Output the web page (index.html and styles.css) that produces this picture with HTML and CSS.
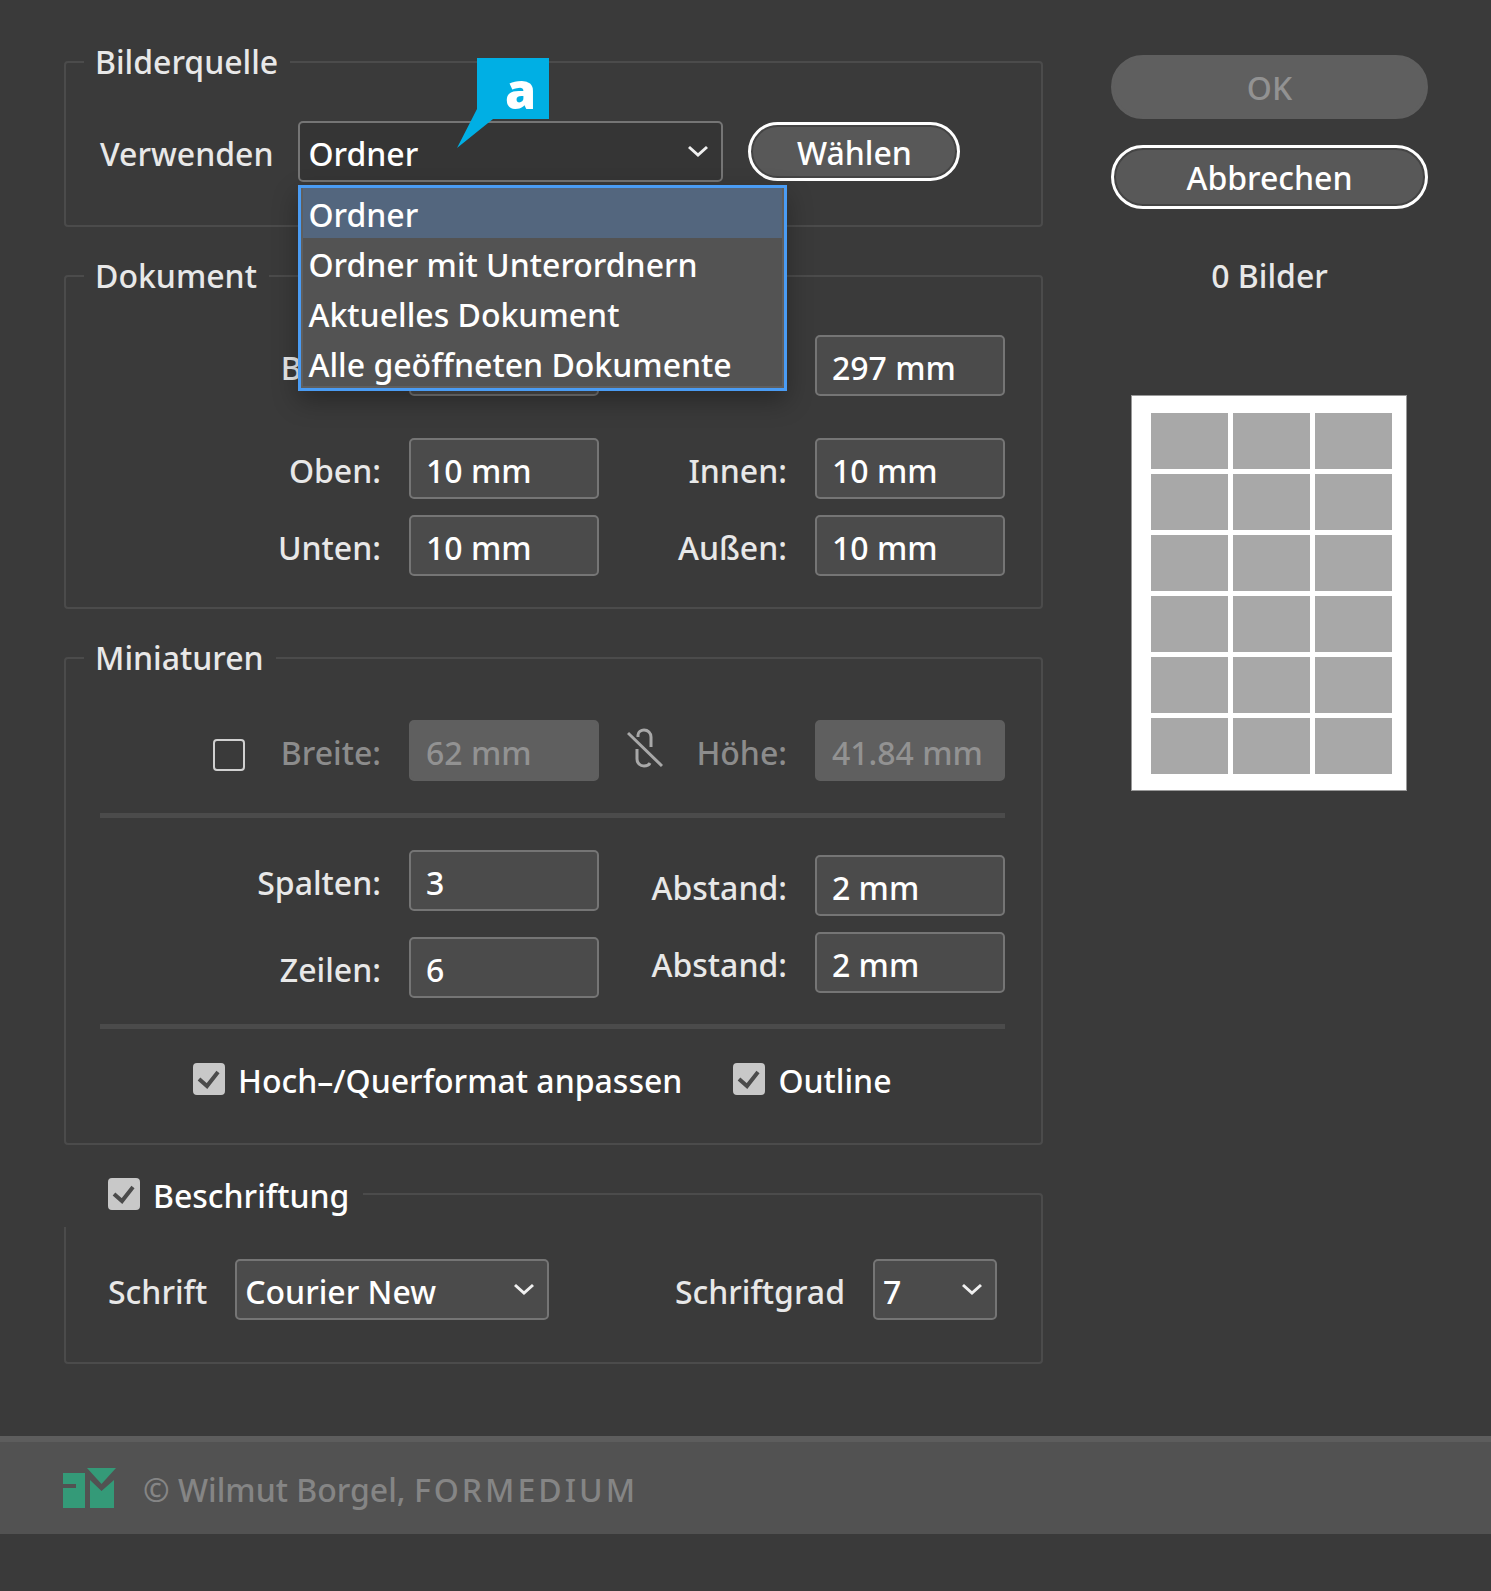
FILE: index.html
```html
<!DOCTYPE html>
<html lang="de">
<head>
<meta charset="utf-8">
<meta name="viewport" content="width=device-width, initial-scale=1">
<title>Kontaktabzug</title>
<link rel="stylesheet" href="styles.css">
</head>
<body>
<form class="dialog">
  <div class="settings">
    <fieldset class="group group-source">
      <legend class="group-title">Bilderquelle</legend>
      <div class="source-row">
        <label class="label" for="source">Verwenden</label>
        <div class="dropdown dropdown-source">
          <select class="select select-open" id="source">
            <option selected>Ordner</option>
            <option>Ordner mit Unterordnern</option>
            <option>Aktuelles Dokument</option>
            <option>Alle geöffneten Dokumente</option>
          </select>
          <svg class="chevron" viewBox="0 0 20 12" aria-hidden="true"><path d="M1 2L10 10L19 2"/></svg>
          <ul class="menu" role="listbox" aria-label="Verwenden">
            <li class="menu-item menu-item-active" role="option" aria-selected="true">Ordner</li>
            <li class="menu-item" role="option">Ordner mit Unterordnern</li>
            <li class="menu-item" role="option">Aktuelles Dokument</li>
            <li class="menu-item" role="option">Alle geöffneten Dokumente</li>
          </ul>
          <div class="callout">
            <svg class="callout-shape" viewBox="0 0 92 90" aria-hidden="true"><path d="M20 0H92V61H36L0 90L20 51Z"/></svg>
            <span class="callout-letter">a</span>
          </div>
        </div>
        <button class="button button-choose" type="button">Wählen</button>
      </div>
    </fieldset>

    <fieldset class="group group-document">
      <legend class="group-title">Dokument</legend>
      <div class="field-grid">
        <label class="label" for="doc-width">Breite:</label>
        <input class="field" id="doc-width" type="text" value="210 mm">
        <label class="label" for="doc-height">Höhe:</label>
        <input class="field" id="doc-height" type="text" value="297 mm">
      </div>
      <div class="field-grid field-grid-margins">
        <label class="label" for="top">Oben:</label>
        <input class="field" id="top" type="text" value="10 mm">
        <label class="label" for="inner">Innen:</label>
        <input class="field" id="inner" type="text" value="10 mm">
        <label class="label" for="bottom">Unten:</label>
        <input class="field" id="bottom" type="text" value="10 mm">
        <label class="label" for="outer">Außen:</label>
        <input class="field" id="outer" type="text" value="10 mm">
      </div>
    </fieldset>

    <fieldset class="group group-thumbs">
      <legend class="group-title">Miniaturen</legend>
      <div class="field-grid">
        <div class="size-toggle">
          <input class="check" type="checkbox" aria-label="Feste Größe">
          <label class="label label-off" for="thumb-width">Breite:</label>
        </div>
        <input class="field" id="thumb-width" type="text" value="62 mm" disabled>
        <div class="size-link">
          <svg class="unlink" viewBox="0 0 36 40" aria-hidden="true"><path d="M11 9V7C11 4 14 2 17 2C21 2 24 5 24 9V19M10 21V31C10 35 13 38 17 38C20 38 22 37 23 35M1 5L35 38"/></svg>
          <label class="label label-off" for="thumb-height">Höhe:</label>
        </div>
        <input class="field" id="thumb-height" type="text" value="41.84 mm" disabled>
      </div>
      <hr class="rule">
      <div class="count-columns">
        <div class="count-column">
          <label class="label" for="columns">Spalten:</label>
          <input class="field" id="columns" type="text" value="3">
          <label class="label" for="rows">Zeilen:</label>
          <input class="field" id="rows" type="text" value="6">
        </div>
        <div class="count-column count-column-gaps">
          <label class="label" for="column-gap">Abstand:</label>
          <input class="field" id="column-gap" type="text" value="2 mm">
          <label class="label" for="row-gap">Abstand:</label>
          <input class="field" id="row-gap" type="text" value="2 mm">
        </div>
      </div>
      <hr class="rule rule-last">
      <div class="options">
        <label class="option"><input class="check" type="checkbox" checked><span class="option-text">Hoch–/Querformat anpassen</span></label>
        <label class="option"><input class="check" type="checkbox" checked><span class="option-text">Outline</span></label>
      </div>
    </fieldset>

    <fieldset class="group group-caption">
      <legend class="group-title caption-title">
        <label class="option"><input class="check" type="checkbox" checked><span class="option-text">Beschriftung</span></label>
      </legend>
      <div class="font-row">
        <div class="font-choice">
          <label class="label" for="font">Schrift</label>
          <div class="dropdown dropdown-font">
            <select class="select" id="font"><option>Courier New</option></select>
            <svg class="chevron" viewBox="0 0 20 12" aria-hidden="true"><path d="M1 2L10 10L19 2"/></svg>
          </div>
        </div>
        <div class="font-choice">
          <label class="label" for="font-size">Schriftgrad</label>
          <div class="dropdown dropdown-size">
            <select class="select" id="font-size"><option>7</option></select>
            <svg class="chevron" viewBox="0 0 20 12" aria-hidden="true"><path d="M1 2L10 10L19 2"/></svg>
          </div>
        </div>
      </div>
    </fieldset>
  </div>

  <aside class="actions">
    <button class="button" type="submit" disabled>OK</button>
    <button class="button" type="button">Abbrechen</button>
    <p class="count">0 Bilder</p>
    <div class="sheet">
      <i class="cell"></i><i class="cell"></i><i class="cell"></i>
      <i class="cell"></i><i class="cell"></i><i class="cell"></i>
      <i class="cell"></i><i class="cell"></i><i class="cell"></i>
      <i class="cell"></i><i class="cell"></i><i class="cell"></i>
      <i class="cell"></i><i class="cell"></i><i class="cell"></i>
      <i class="cell"></i><i class="cell"></i><i class="cell"></i>
    </div>
  </aside>
</form>

<footer class="footer">
  <svg class="logo" viewBox="0 0 54 40" aria-hidden="true"><path d="M0 5H22V40H0V20H13V16H0ZM24 0H53L38.5 16ZM27 12L38.5 23L51 12V40H27Z"/></svg>
  <p class="credit">© Wilmut Borgel, <span class="brand">FORMEDIUM</span></p>
</footer>
</body>
</html>
```
FILE: styles.css
```css
* {
  box-sizing: border-box;
}

body {
  margin: 0;
  background: #3a3a3a;
  color: #fff;
  font: 500 32px/44px "Noto Sans", "Open Sans", sans-serif;
}

input,
select,
button {
  margin: 0;
  color: inherit;
  font: inherit;
}

.dialog {
  display: flex;
  align-items: flex-start;
  gap: 68px;
  padding: 40px 63px 72px 64px;
}

.settings {
  flex: 1;
  min-width: 0;
}

/* Framed groups */

.group {
  min-width: 0;
  margin: 0 0 27px;
  padding: 37px 36px 31px 34px;
  border: 2px solid #4b4b4b;
  border-radius: 4px;
}

.group-source {
  padding-bottom: 43px;
}

.group-thumbs {
  margin-bottom: 16px;
  padding-top: 40px;
  padding-bottom: 42px;
}

.group-caption {
  margin-bottom: 0;
  padding-top: 32px;
  padding-bottom: 42px;
}

.group-title {
  margin-left: -16px;
  padding: 0 12px 0 11px;
  color: #e8e8e8;
}

.caption-title {
  margin-left: -36px;
  padding: 11px 14px 11px 44px;
  background: #3a3a3a;
  color: #fff;
}

/* Labels and fields */

.label {
  padding-top: 4px;
  color: #e8e8e8;
  text-align: right;
  white-space: nowrap;
}

.label-off {
  color: #8c8c8c;
}

.field {
  width: 100%;
  height: 61px;
  padding: 4px 0 0 15px;
  border: 2px solid #757575;
  border-radius: 5px;
  background: #4b4b4b;
}

.field:disabled {
  border-color: #5f5f5f;
  background: #5f5f5f;
  color: #929292;
}

.field-grid {
  display: grid;
  grid-template-columns: minmax(0, 281fr) 190px minmax(0, 160fr) 190px;
  align-items: center;
  gap: 16px 28px;
}

.field-grid-margins {
  margin-top: 42px;
}

.size-toggle,
.size-link {
  display: flex;
  align-items: center;
  justify-content: flex-end;
  gap: 36px;
}

.size-toggle .check {
  margin-top: 8px;
}

.size-link {
  justify-content: space-between;
  gap: 0;
}

.unlink {
  width: 36px;
  height: 40px;
  margin-bottom: 6px;
  fill: none;
  stroke: #a8a8a8;
  stroke-width: 3;
}

.rule {
  height: 5px;
  margin: 32px 0;
  border: 0;
  background: #4b4b4b;
}

.rule-last {
  margin: 26px 0 28px;
}

.count-columns {
  display: grid;
  grid-template-columns: 499fr 378fr;
  align-items: center;
  gap: 28px;
}

.count-column {
  display: grid;
  grid-template-columns: 1fr 190px;
  align-items: center;
  gap: 26px 28px;
}

.count-column-gaps {
  row-gap: 16px;
}

/* Tick boxes */

.check {
  flex: none;
  width: 32px;
  height: 32px;
  border: 2px solid #d0d0d0;
  border-radius: 4px;
  appearance: none;
}

.check:checked {
  border-color: #c8c8c8;
  background: #c8c8c8 url("data:image/svg+xml,%3Csvg xmlns='http://www.w3.org/2000/svg' viewBox='0 0 28 28'%3E%3Cpath d='M4 14L12 21L23 7' fill='none' stroke='%234b4b4b' stroke-width='4'/%3E%3C/svg%3E") center / 28px no-repeat;
}

.option {
  display: flex;
  align-items: center;
  gap: 13px;
  height: 44px;
  white-space: nowrap;
}

.option-text {
  padding-top: 4px;
}

.options {
  display: flex;
  gap: 51px;
  padding-left: 93px;
}

/* Drop-downs */

.source-row,
.font-row,
.font-choice {
  display: flex;
  align-items: center;
}

.source-row {
  gap: 25px;
}

.font-row {
  justify-content: space-between;
  padding: 0 8px;
}

.font-choice {
  gap: 28px;
}

.dropdown {
  position: relative;
}

.dropdown-source {
  width: 425px;
}

.dropdown-font {
  width: 314px;
}

.dropdown-size {
  width: 124px;
}

.select {
  display: block;
  width: 100%;
  height: 61px;
  padding: 4px 44px 0 8px;
  border: 2px solid #757575;
  border-radius: 5px;
  background: #4b4b4b;
  appearance: none;
}

.select-open {
  background: #353535;
}

.chevron {
  position: absolute;
  top: 24px;
  right: 15px;
  width: 20px;
  height: 12px;
  fill: none;
  stroke: #f0f0f0;
  stroke-width: 3;
  pointer-events: none;
}

.menu {
  position: absolute;
  z-index: 1;
  top: 64px;
  left: 0;
  width: 489px;
  margin: 0;
  padding: 0;
  border: 3px solid #4a9cf4;
  background: #535353;
  box-shadow: inset 0 0 0 2px #5f5f5f, 0 10px 24px rgba(0, 0, 0, 0.3);
  list-style: none;
}

.menu-item {
  height: 50px;
  margin: 0 2px;
  padding: 5px 5px 0;
  white-space: nowrap;
}

.menu-item-active {
  background: #53667e;
}

.callout {
  position: absolute;
  z-index: 2;
  top: -63px;
  left: 159px;
  width: 92px;
  height: 90px;
}

.callout-shape {
  display: block;
  fill: #00afe4;
}

.callout-letter {
  position: absolute;
  top: 0;
  right: 0;
  width: 58px;
  font: 800 50px/64px "Open Sans", sans-serif;
  text-align: center;
}

/* Buttons and preview */

.button {
  height: 64px;
  padding: 2px 0 0;
  border: 3px solid #fff;
  border-radius: 32px;
  background: #585858;
  box-shadow: inset 0 0 0 2px #444;
}

.button:disabled {
  border-color: #5f5f5f;
  background: #5f5f5f;
  box-shadow: none;
  color: #929292;
}

.button-choose {
  width: 212px;
  height: 59px;
}

.actions {
  display: flex;
  flex: 0 0 317px;
  flex-direction: column;
  gap: 26px;
  padding-top: 15px;
}

.count {
  margin: 19px 0 0;
  color: #e8e8e8;
  text-align: center;
}

.sheet {
  display: grid;
  grid-template-columns: repeat(3, 1fr);
  grid-auto-rows: 56px;
  align-self: center;
  gap: 5px;
  width: 276px;
  margin: 71px 2px 0 0;
  padding: 17px 14px 16px 19px;
  border: 1px solid #999;
  background: #fff;
}

.cell {
  background: #a8a8a8;
}

/* Footer */

.footer {
  display: flex;
  align-items: center;
  gap: 26px;
  height: 98px;
  padding: 0 63px;
  border-top: 6px solid #5d5d5d;
  background: #525252;
}

.logo {
  width: 54px;
  height: 40px;
  fill: #349a78;
}

.credit {
  margin: 0;
  padding-top: 3px;
  color: #858585;
}

.brand {
  letter-spacing: 3px;
}
```
